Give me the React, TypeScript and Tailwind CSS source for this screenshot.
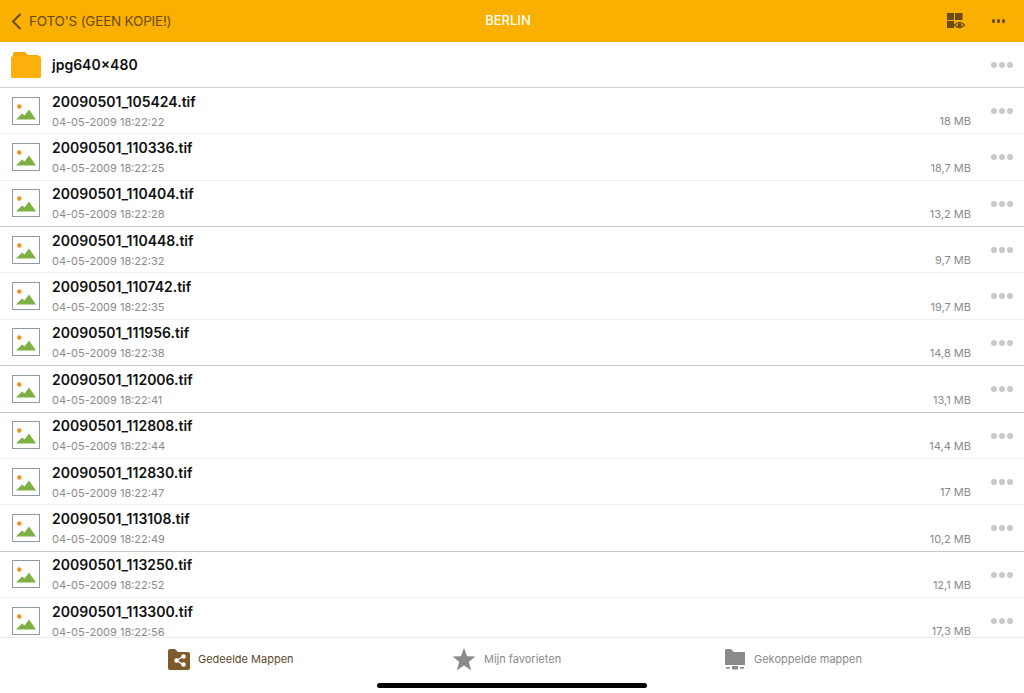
import React from "react";

const files: [string, string, string, boolean][] = [
  ["20090501_105424.tif", "04-05-2009 18:22:22", "18 MB", false],
  ["20090501_110336.tif", "04-05-2009 18:22:25", "18,7 MB", false],
  ["20090501_110404.tif", "04-05-2009 18:22:28", "13,2 MB", true],
  ["20090501_110448.tif", "04-05-2009 18:22:32", "9,7 MB", false],
  ["20090501_110742.tif", "04-05-2009 18:22:35", "19,7 MB", false],
  ["20090501_111956.tif", "04-05-2009 18:22:38", "14,8 MB", true],
  ["20090501_112006.tif", "04-05-2009 18:22:41", "13,1 MB", true],
  ["20090501_112808.tif", "04-05-2009 18:22:44", "14,4 MB", false],
  ["20090501_112830.tif", "04-05-2009 18:22:47", "17 MB", false],
  ["20090501_113108.tif", "04-05-2009 18:22:49", "10,2 MB", true],
  ["20090501_113250.tif", "04-05-2009 18:22:52", "12,1 MB", false],
  ["20090501_113300.tif", "04-05-2009 18:22:56", "17,3 MB", false],
];

function Dots({ cls }: { cls: string }) {
  return (
    <div className="flex gap-[2px]">
      <span className={`w-[6px] h-[6px] rounded-full ${cls}`} />
      <span className={`w-[6px] h-[6px] rounded-full ${cls}`} />
      <span className={`w-[6px] h-[6px] rounded-full ${cls}`} />
    </div>
  );
}

function ImageIcon() {
  return (
    <svg width="28" height="28" viewBox="0 0 28 28" className="shrink-0">
      <rect x="0.5" y="0.5" width="27" height="27" fill="#fff" stroke="#8f9ba3" />
      <circle cx="7.3" cy="9.5" r="2.2" fill="#ef8f1c" />
      <path d="M4 22.5 L10 16.5 L12.5 18.5 L17 12.5 L24 22.5 Z" fill="#7db043" />
    </svg>
  );
}

function FolderIcon() {
  return (
    <svg width="30" height="27" viewBox="0 0 30 27" className="shrink-0">
      <path d="M2 3 Q2 1 4 1 H13 Q15 1 16 3 L17 4 H27 V6 H2 Z" fill="#f7a600" />
      <path d="M0 7 Q0 5 2 5 H28 Q30 5 30 7 V25.5 Q30 27 28.5 27 H1.5 Q0 27 0 25.5 Z" fill="#fdb10c" />
    </svg>
  );
}

function SharedIcon() {
  return (
    <svg width="22" height="21" viewBox="0 0 22 21">
      <path d="M0 2 Q0 0 2 0 H7 L10 3 H20 Q22 3 22 5 V19 Q22 21 20 21 H2 Q0 21 0 19 Z" fill="#7c5a2b" />
      <path d="M15 7.5 L8.5 11.5 L15 15.5" stroke="#fff" strokeWidth="1.4" fill="none" />
      <circle cx="15.5" cy="7.5" r="2.3" fill="#fff" />
      <circle cx="8.5" cy="11.5" r="2.3" fill="#fff" />
      <circle cx="15.5" cy="15.5" r="2.3" fill="#fff" />
    </svg>
  );
}

function StarIcon() {
  return (
    <svg width="24" height="23" viewBox="0 0 24 23">
      <path d="M12 0 L15 8.3 L23.5 8.5 L16.8 13.8 L19.2 22.3 L12 17.4 L4.8 22.3 L7.2 13.8 L0.5 8.5 L9 8.3 Z" fill="#8a8a8a" />
    </svg>
  );
}

function LinkedIcon() {
  return (
    <svg width="20" height="21" viewBox="0 0 20 21">
      <path d="M0 1 Q0 0 1 0 H6 L9 3 H19 Q20 3 20 4 V16 H0 Z" fill="#8a8a8a" />
      <rect x="1" y="18" width="4" height="1.6" fill="#8a8a8a" />
      <rect x="7" y="17" width="6" height="3.5" fill="#8a8a8a" />
      <rect x="15" y="18" width="4" height="1.6" fill="#8a8a8a" />
    </svg>
  );
}

function GridEyeIcon() {
  return (
    <svg width="18" height="16" viewBox="0 0 18 16">
      <rect x="0" y="0" width="7" height="7" fill="#6b4a1a" />
      <rect x="8" y="0" width="7.5" height="7" fill="#6b4a1a" />
      <rect x="0" y="8" width="7" height="7" fill="#6b4a1a" />
      <path d="M7.5 12 Q12.5 6.5 17.5 12 Q12.5 17 7.5 12 Z" fill="#f9b000" stroke="#6b4a1a" strokeWidth="1.2" />
      <circle cx="12.5" cy="12" r="2" fill="#6b4a1a" />
    </svg>
  );
}

export default function App() {
  return (
    <div className="w-[1024px] h-[693px] overflow-hidden bg-white flex flex-col font-['Inter','Liberation_Sans',sans-serif]">
      <header className="h-[42px] shrink-0 bg-[#f9b000] grid grid-cols-3 items-center pl-[11px] pr-[19px]">
        <div className="flex items-center gap-[7px] text-[#6b4a1a]">
          <svg width="11" height="17" viewBox="0 0 11 17">
            <path d="M9.5 1 L2 8.5 L9.5 16" fill="none" stroke="#6b4a1a" strokeWidth="2" />
          </svg>
          <span className="text-[13.5px] tracking-[-0.2px] whitespace-nowrap">FOTO'S (GEEN KOPIE!)</span>
        </div>
        <div className="text-center text-white text-[13px] font-medium">BERLIN</div>
        <div className="flex items-center justify-end gap-[27px]">
          <GridEyeIcon />
          <div className="flex gap-[1.5px]">
            <span className="w-[3.5px] h-[3.5px] rounded-full bg-[#6b4a1a]" />
            <span className="w-[3.5px] h-[3.5px] rounded-full bg-[#6b4a1a]" />
            <span className="w-[3.5px] h-[3.5px] rounded-full bg-[#6b4a1a]" />
          </div>
        </div>
      </header>

      <main className="flex-1 min-h-0 overflow-hidden">
        <div className="h-[46px] flex items-center pl-[11px] pr-[11px] border-b border-[#cfcfcf]">
          <FolderIcon />
          <span className="ml-[11px] text-[14px] font-semibold text-[#111]">jpg640x480</span>
          <div className="ml-auto"><Dots cls="bg-[#c9c9c9]" /></div>
        </div>
        {files.map(([name, date, size, dark]) => (
          <div
            key={name}
            className={`h-[46.36px] flex items-center pl-[12px] pr-[11px] border-b ${dark ? "border-[#c9c9c9]" : "border-[#efefef]"}`}
          >
            <ImageIcon />
            <div className="ml-[12px] flex-1 min-w-0 flex flex-col">
              <span className="text-[14px] leading-[18px] font-semibold text-[#111]">{name}</span>
              <span className="mt-[4px] text-[11px] leading-[14px] text-[#8a8a8a]">{date}</span>
            </div>
            <div className="self-stretch relative w-[32px] shrink-0 ml-[8px]" />
            <span className="self-end mb-[5px] mr-[20px] text-[11px] leading-[14px] text-[#8a8a8a] whitespace-nowrap">{size}</span>
            <div className="self-start mt-[20px]"><Dots cls="bg-[#c9c9c9]" /></div>
          </div>
        ))}
      </main>

      <footer className="h-[56px] shrink-0 bg-white border-t border-[#ececec] relative">
        <div className="flex items-center h-[42px] pl-[168px]">
          <SharedIcon />
          <span className="ml-[8px] text-[11px] text-[#5b4a2d] w-[100px] whitespace-nowrap">Gedeelde Mappen</span>
          <div className="ml-[154px]"><StarIcon /></div>
          <span className="ml-[8px] text-[11px] text-[#8a8a8a] w-[80px] whitespace-nowrap">Mijn favorieten</span>
          <div className="ml-[161px]"><LinkedIcon /></div>
          <span className="ml-[9px] text-[11px] text-[#8a8a8a] whitespace-nowrap">Gekoppelde mappen</span>
        </div>
        <div className="absolute left-[377px] top-[45px] w-[270px] h-[5px] rounded-full bg-black" />
      </footer>
    </div>
  );
}
